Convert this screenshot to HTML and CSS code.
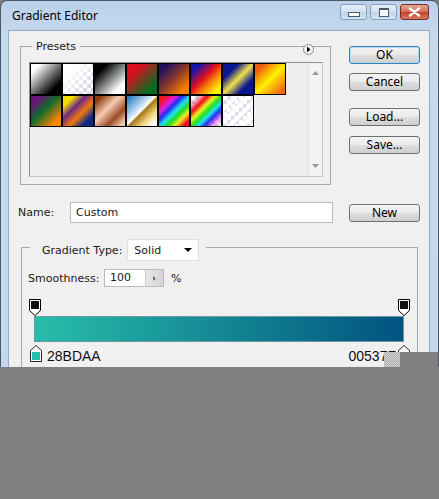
FILE: index.html
```html
<!DOCTYPE html>
<html lang="en">
<head>
    <meta charset="UTF-8">
    <title>Gradient Editor</title>
    <link rel="stylesheet" href="styles.css">
</head>
<body>
    <div class="window">
        <div class="titlebar">
            <span class="title">Gradient Editor</span>
            <div class="caption">
                <span class="cap cap-min"><i></i></span>
                <span class="cap cap-max"><i></i></span>
                <span class="cap cap-close">
                    <svg width="13" height="10" viewBox="0 0 13 10"><path d="M2 1.5l9 7M11 1.5l-9 7" stroke="#fff" stroke-width="2.4" stroke-linecap="round"/></svg>
                </span>
            </div>
        </div>

        <div class="client">
            <div class="top">
                <fieldset class="group presets">
                    <legend>Presets</legend>
                    <span class="menu-arrow">
                        <svg width="11" height="11" viewBox="0 0 11 11"><circle cx="5.5" cy="5.5" r="5" fill="#f6f6f6" stroke="#8a8a8a"/><path d="M4 2.5l3.5 3-3.5 3z" fill="#000"/></svg>
                    </span>
                    <div class="listbox">
                        <div class="swatches">
                            <span class="sw sw-bw"></span>
                            <span class="sw sw-wt"></span>
                            <span class="sw sw-kw"></span>
                            <span class="sw sw-rg"></span>
                            <span class="sw sw-vo"></span>
                            <span class="sw sw-bry"></span>
                            <span class="sw sw-byb"></span>
                            <span class="sw sw-oyo"></span>
                            <span class="sw sw-vgo"></span>
                            <span class="sw sw-yvob"></span>
                            <span class="sw sw-copper"></span>
                            <span class="sw sw-chrome"></span>
                            <span class="sw sw-spectrum"></span>
                            <span class="sw sw-trainbow"></span>
                            <span class="sw sw-tstripes"></span>
                        </div>
                        <div class="scrollbar">
                            <svg width="7" height="4" viewBox="0 0 7 4"><path d="M0 4l3.5-4 3.5 4z" fill="#9a9a9a"/></svg>
                            <svg width="7" height="4" viewBox="0 0 7 4"><path d="M0 0l3.5 4 3.5-4z" fill="#9a9a9a"/></svg>
                        </div>
                    </div>
                </fieldset>

                <div class="buttons">
                    <button class="btn btn-default">OK</button>
                    <button class="btn btn-cancel">Cancel</button>
                    <button class="btn btn-load">Load...</button>
                    <button class="btn btn-save">Save...</button>
                </div>
            </div>

            <div class="name-row">
                <label class="name-label">Name:</label>
                <div class="name-input">Custom</div>
                <button class="btn btn-new">New</button>
            </div>

            <fieldset class="group gradient">
                <legend>
                    <span>Gradient Type:</span>
                    <span class="select">Solid
                        <svg width="8" height="4" viewBox="0 0 8 4"><path d="M0 0h8l-4 4z" fill="#000"/></svg>
                    </span>
                </legend>

                <div class="smooth-row">
                    <span class="smooth-label">Smoothness:</span>
                    <span class="num-box">
                        <span class="num-value">100</span>
                        <span class="spin">
                            <svg width="3" height="5" viewBox="0 0 3 5"><path d="M0 0l3 2.5-3 2.5z" fill="#666"/></svg>
                        </span>
                    </span>
                    <span class="pct">%</span>
                </div>

                <div class="stops-row">
                    <svg class="stop" width="12" height="17" viewBox="0 0 12 17"><path d="M0.5 0.5h11v11l-5.5 5-5.5-5z" fill="#fff" stroke="#000"/><rect x="2" y="2" width="8" height="8" fill="#111"/></svg>
                    <svg class="stop" width="12" height="17" viewBox="0 0 12 17"><path d="M0.5 0.5h11v11l-5.5 5-5.5-5z" fill="#fff" stroke="#000"/><rect x="2" y="2" width="8" height="8" fill="#111"/></svg>
                </div>

                <div class="gradient-bar"></div>

                <div class="color-row">
                    <svg class="stop" width="12" height="17" viewBox="0 0 12 17"><path d="M0.5 16.5h11v-11l-5.5-5-5.5 5z" fill="#fff" stroke="#222"/><rect x="2" y="7" width="8" height="8" fill="#28bdaa"/></svg>
                    <span class="hex">28BDAA</span>
                    <span class="hex hex-right">00537F</span>
                    <svg class="stop" width="12" height="17" viewBox="0 0 12 17"><path d="M0.5 16.5h11v-11l-5.5-5-5.5 5z" fill="#fff" stroke="#222"/><rect x="2" y="7" width="8" height="8" fill="#00537f"/></svg>
                </div>
            </fieldset>
        </div>

        <div class="checker"></div>
        <div class="cover"></div>
    </div>
</body>
</html>
```

FILE: styles.css
```css
body {
    margin: 0;
    background-color: #808080;
    font-family: "DejaVu Sans", sans-serif;
    font-size: 11px;
    color: #1a1a1a;
}
.window {
    position: relative;
    width: 439px;
    height: 367px;
    box-sizing: border-box;
    overflow: hidden;
    padding: 0 8px 0 7px;
    border: 1px solid #4a5868;
    border-bottom: none;
    border-radius: 7px 7px 0 0;
    background: linear-gradient(#b9d1ea, #c7dbef 40px, #c3d8ee);
}
.titlebar {
    height: 29px;
    display: flex;
    justify-content: space-between;
}
.title {
    font-family: "Noto Sans", sans-serif;
    font-size: 12px;
    line-height: 30px;
    margin-left: 4px;
    color: #000;
}
.caption {
    display: flex;
    gap: 3px;
    margin-top: 3px;
    margin-right: 1px;
    height: 16px;
}
.cap {
    width: 27px;
    height: 16px;
    box-sizing: border-box;
    border: 1px solid #8aa0b8;
    border-radius: 3px;
    background: linear-gradient(#e4eef8, #d2e2f2 50%, #bfd3e8 51%, #d3e3f3);
    display: flex;
    align-items: center;
    justify-content: center;
}
.cap-min i {
    width: 10px;
    height: 3px;
    margin-top: 5px;
    border: 1px solid #4b5b6d;
    background: #fff;
}
.cap-max i {
    width: 8px;
    height: 6px;
    border: 1px solid #4b5b6d;
    border-top-width: 2px;
    background: #fff;
}
.cap-close {
    width: 29px;
    border-color: #7a2e2a;
    background: linear-gradient(#e6a594, #d3705c 50%, #c3412b 51%, #d8785f);
}
.client {
    height: 338px;
    box-sizing: border-box;
    border: 1px solid #94abc4;
    border-bottom: none;
    background-color: #f0f0f0;
}
.top {
    display: flex;
    align-items: flex-start;
    margin-top: 8px;
    padding-left: 11px;
}
.group {
    margin: 0;
    min-inline-size: 0;
    border: 1px solid #a9a9a9;
    box-sizing: border-box;
}
.presets {
    position: relative;
    width: 311px;
    padding: 8px 7px 7px 8px;
}
.presets legend {
    margin-left: 3px;
    padding: 1px 4px 0;
    line-height: 14px;
}
.menu-arrow {
    position: absolute;
    left: 282px;
    top: -10px;
    line-height: 0;
}
.listbox {
    display: flex;
    width: 294px;
    height: 115px;
    box-sizing: border-box;
    border: 1px solid #8e8f8f;
    border-right-color: #c8c8c8;
    border-bottom-color: #c8c8c8;
    background-color: #efefef;
}
.swatches {
    flex: 1;
    display: flex;
    flex-wrap: wrap;
    align-content: flex-start;
    width: 256px;
    padding-right: 21px;
}
.sw {
    width: 32px;
    height: 32px;
    box-sizing: border-box;
    border: 1px solid #000;
}
.sw-bw { background: linear-gradient(135deg, #fff 15%, #000 80%); }
.sw-wt {
    background:
        linear-gradient(135deg, #fff 25%, rgba(255,255,255,0) 85%),
        repeating-conic-gradient(#d5d5e6 0 25%, #fff 0 50%) 0 0 / 8px 8px;
}
.sw-kw { background: linear-gradient(135deg, #000 20%, #fff 80%); }
.sw-rg { background: linear-gradient(135deg, #d8101e 25%, #0a6a22 80%); }
.sw-vo { background: linear-gradient(135deg, #24105e 15%, #8a3a2a 50%, #ff7d00 85%); }
.sw-bry { background: linear-gradient(135deg, #1316ad 15%, #e4101c 45%, #f57a0c 62%, #ffef00 85%); }
.sw-byb { background: linear-gradient(135deg, #0a1592 25%, #efe048 50%, #0a1592 75%); }
.sw-oyo { background: linear-gradient(135deg, #ee5c10 15%, #fff200 50%, #ee6a10 90%); }
.sw-vgo { background: linear-gradient(135deg, #6a127c 15%, #0f6a2c 45%, #ff8600 85%); }
.sw-yvob { background: linear-gradient(135deg, #f7dc00 18%, #6e2a82 38%, #f07810 60%, #0d2a80 82%); }
.sw-copper { background: linear-gradient(135deg, #8a3a0c 10%, #f5cdb4 42%, #9a4c26 70%, #f2c8b0 92%); }
.sw-chrome { background: linear-gradient(135deg, #2a7fc2 5%, #d3e8f8 42%, #fff 48%, #a0781a 53%, #f3d27a 72%, #fff 92%); }
.sw-spectrum { background: linear-gradient(135deg, #f01020 12%, #e020e0 28%, #2030f0 40%, #20e0f0 52%, #20e020 64%, #f0f020 76%, #f01020 90%); }
.sw-trainbow {
    background:
        linear-gradient(135deg, rgba(240,16,32,0) 10%, #f01020 28%, #f0f020 40%, #20e020 52%, #20e0f0 62%, #2030f0 72%, rgba(224,32,224,0.5) 84%, rgba(255,255,255,0) 95%),
        repeating-conic-gradient(#d5d5e6 0 25%, #fff 0 50%) 0 0 / 8px 8px;
}
.sw-tstripes {
    background:
        repeating-linear-gradient(135deg, rgba(255,255,255,0.9) 0 4px, rgba(255,255,255,0.2) 4px 8px),
        repeating-conic-gradient(#d5d5e6 0 25%, #fff 0 50%) 0 0 / 8px 8px;
}
.scrollbar {
    width: 13px;
    border-left: 1px solid #e2e2e2;
    background-color: #f3f3f3;
    display: flex;
    flex-direction: column;
    justify-content: space-between;
    align-items: center;
    padding: 8px 0 8px;
}
.buttons {
    margin-left: 18px;
    margin-top: 7px;
}
.btn {
    display: block;
    width: 71px;
    height: 18px;
    padding: 0;
    box-sizing: border-box;
    border: 1px solid #707070;
    border-radius: 3px;
    background: linear-gradient(#f3f3f3, #ebebeb 48%, #dddddd 52%, #cfcfcf);
    font-family: "Noto Sans", sans-serif;
    font-size: 12px;
    line-height: 16px;
    color: #000;
}
.btn-default {
    border-color: #3c7fb1;
    box-shadow: inset 0 0 0 1px #a8dcf4;
}
.btn-cancel { margin-top: 9px; }
.btn-load { margin-top: 17px; }
.btn-save { margin-top: 10px; }
.name-row {
    display: flex;
    align-items: center;
    margin-top: 17px;
    padding-left: 9px;
    height: 21px;
}
.name-label {
    width: 52px;
}
.name-input {
    width: 263px;
    height: 21px;
    box-sizing: border-box;
    border: 1px solid #b8bcc2;
    background-color: #fff;
    padding-left: 5px;
    line-height: 19px;
}
.btn-new {
    margin-left: 16px;
}
.gradient {
    width: 397px;
    height: 150px;
    margin-top: 10px;
    margin-left: 12px;
    padding: 8px 6px 0 6px;
}
.gradient legend {
    display: flex;
    align-items: center;
    margin-left: 2px;
    padding: 6px 7px 0 12px;
}
.select {
    display: flex;
    align-items: center;
    justify-content: space-between;
    width: 72px;
    height: 22px;
    box-sizing: border-box;
    margin-left: 5px;
    padding: 0 6px 0 6px;
    border: 1px solid #e0e0e0;
    background-color: #fff;
}
.smooth-row {
    display: flex;
    align-items: center;
    height: 18px;
}
.smooth-label {
    width: 76px;
}
.num-box {
    display: flex;
    width: 60px;
    height: 18px;
    box-sizing: border-box;
    border: 1px solid #b8bcc2;
    background-color: #fff;
}
.num-value {
    flex: 1;
    padding-left: 5px;
    line-height: 16px;
}
.spin {
    width: 17px;
    display: flex;
    align-items: center;
    justify-content: center;
    border-left: 1px solid #d0d0d0;
    background: linear-gradient(90deg, #e8e8e8, #d4d4d4);
}
.pct {
    margin-left: 7px;
}
.stops-row {
    display: flex;
    justify-content: space-between;
    margin-top: 12px;
    padding: 0 1px;
    line-height: 0;
}
.gradient-bar {
    width: 370px;
    height: 26px;
    box-sizing: border-box;
    margin-left: 6px;
    border: 1px solid #6f97a2;
    background: linear-gradient(to right, #28bdaa, #00537f);
}
.color-row {
    display: flex;
    align-items: flex-start;
    margin-top: 3px;
    padding: 0 1px 0 2px;
}
.hex {
    margin-left: 5px;
    margin-top: 3px;
    font-family: "Liberation Sans", Arial, sans-serif;
    font-size: 14px;
    line-height: 16px;
    color: #111;
}
.hex-right {
    margin-left: auto;
    margin-right: 2px;
}
.checker {
    position: absolute;
    left: 383px;
    top: 351px;
    width: 16px;
    height: 16px;
    background: repeating-conic-gradient(#a8a8a8 0 25%, #d8d8d8 0 50%) 0 0 / 2px 2px;
}
.cover {
    position: absolute;
    left: 399px;
    top: 351px;
    width: 40px;
    height: 16px;
    background-color: #808080;
}
```
